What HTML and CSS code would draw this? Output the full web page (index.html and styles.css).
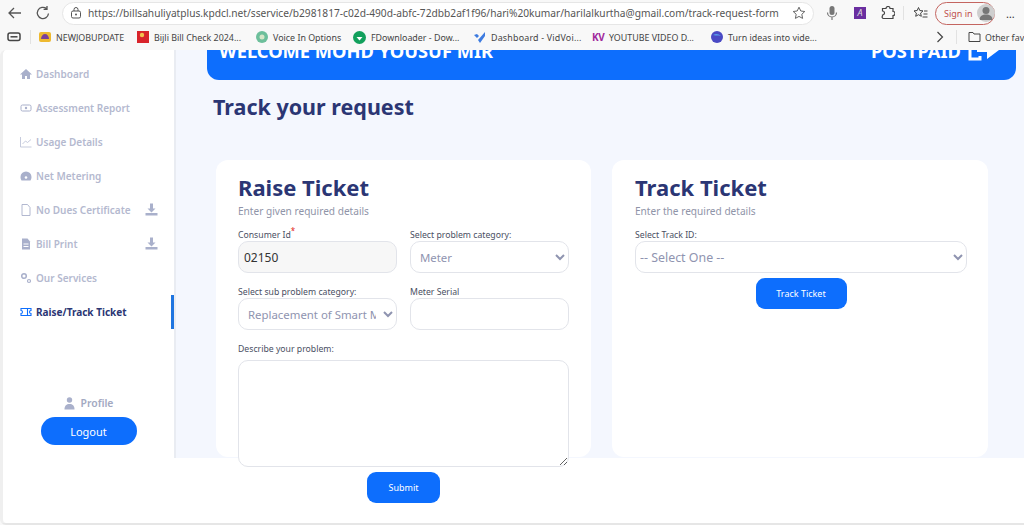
FILE: index.html
```html
<!DOCTYPE html>
<html lang="en">
<head>
    <meta charset="UTF-8">
    <title>Track your request</title>
    <link rel="stylesheet" href="styles.css">
</head>
<body>
    <div class="toolbar">
        <svg class="tool-icon" width="18" height="18" viewBox="0 0 18 18"><path d="M15 9H3M8 4L3 9l5 5" fill="none" stroke="#555" stroke-width="1.3"/></svg>
        <svg class="tool-icon reload" width="16" height="16" viewBox="0 0 16 16"><path d="M13.5 8.500A5.600 5.600 0 1 1 11.500 3.600M12 1v3.400H8.600" fill="none" stroke="#555" stroke-width="1.3"/></svg>
        <div class="address">
            <svg width="12" height="12" viewBox="0 0 12 12"><rect x="1.500" y="4" width="9" height="7" rx="1.500" fill="none" stroke="#555"/><path d="M4 4V2.500a2 2 0 0 1 4 0V4" fill="none" stroke="#555"/><circle cx="6" cy="7.500" r="1" fill="#555"/></svg>
            <span class="url">https://billsahuliyatplus.kpdcl.net/sservice/b2981817-c02d-490d-abfc-72dbb2af1f96/hari%20kumar/harilalkurtha@gmail.com/track-request-form</span>
            <svg class="star" width="14" height="14" viewBox="0 0 14 14"><path d="M7 1.200l1.800 3.800 4 .5-3 2.800.8 4.100L7 10.400l-3.600 2 .8-4.100-3-2.800 4-.5z" fill="none" stroke="#666"/></svg>
        </div>
        <svg class="mic" width="12" height="16" viewBox="0 0 12 16"><rect x="3.500" y="1" width="5" height="9" rx="2.500" fill="#777"/><path d="M1.500 7.500a4.500 4.500 0 0 0 9 0M6 12v3" fill="none" stroke="#777" stroke-width="1.200"/></svg>
        <span class="ext-a">A</span>
        <svg class="puzzle" width="14" height="14" viewBox="0 0 14 14"><path d="M5 2.500a2 2 0 0 1 4 0h3v3a2 2 0 0 1 0 4v3H2.500a1.500 1.500 0 0 1-1-2.500V9a2 2 0 0 0 0-4V2.500z" fill="none" stroke="#444" stroke-width="1.200"/></svg>
        <span class="divider"></span>
        <svg class="favs" width="15" height="14" viewBox="0 0 15 14"><path d="M5.500 1.500l1.300 3 3.200.4-2.400 2.200.7 3.200-2.800-1.600-2.800 1.600.7-3.200L1 4.900l3.200-.4zM11 5h3.500M10.500 8h4M9.500 11h5" fill="none" stroke="#444"/></svg>
        <div class="signin">
            <span>Sign in</span>
            <span class="avatar"><svg width="18" height="18" viewBox="0 0 18 18"><circle cx="9" cy="6.500" r="3.500" fill="#777"/><path d="M2.500 16c0-4 3-5.500 6.500-5.500s6.500 1.500 6.500 5.500z" fill="#777"/></svg></span>
        </div>
        <span class="more">&#8230;</span>
    </div>

    <div class="bookmarks">
        <svg class="bm-tabs" width="14" height="10" viewBox="0 0 14 10"><rect x="1" y="1" width="12" height="7.500" rx="2" fill="none" stroke="#444" stroke-width="1.500"/><path d="M3.500 4.800h7" stroke="#444" stroke-width="1.500"/></svg>
        <span class="bm-sep"></span>
        <div class="bm bm-1"><svg class="bm-svg" width="12" height="12" viewBox="0 0 12 12"><rect y="1" width="12" height="10" rx="2" fill="#eeb92f"/><path d="M2 8c0-3 2-5 4-5s4 2 4 5z" fill="#7a3f9a"/></svg>NEWJOBUPDATE</div>
        <div class="bm bm-2"><svg class="bm-svg" width="12" height="12" viewBox="0 0 12 12"><rect width="12" height="12" fill="#d8232a"/><circle cx="5" cy="4" r="2.200" fill="#f2c14e"/></svg>Bijli Bill Check 2024...</div>
        <div class="bm bm-3"><svg class="bm-svg" width="12" height="12" viewBox="0 0 12 12"><circle cx="6" cy="6" r="6" fill="#6dbf9b"/><circle cx="6" cy="6" r="2.500" fill="#d6e6c8"/></svg>Voice In Options</div>
        <div class="bm bm-4"><svg class="bm-svg" width="13" height="13" viewBox="0 0 13 13"><circle cx="6.500" cy="6.500" r="6.500" fill="#12a05c"/><path d="M3.500 6h6l-3 3.500z" fill="#fff"/></svg>FDownloader - Dow...</div>
        <div class="bm bm-5"><svg class="bm-svg" width="13" height="13" viewBox="0 0 13 13"><path d="M1 4l3 3 2-2-2-2zM12 1L5 9l2 3 5-7z" fill="#3d7be0"/></svg>Dashboard - VidVoi...</div>
        <div class="bm bm-6"><span class="kv">KV</span>YOUTUBE VIDEO D...</div>
        <div class="bm bm-7"><svg class="bm-svg" width="12" height="12" viewBox="0 0 12 12"><circle cx="6" cy="6" r="6" fill="#4a49c4"/><path d="M2 4c3-2 6-1 8 1-3-1-5 0-8-1z" fill="#5aa0e8"/></svg>Turn ideas into vide...</div>
        <svg class="bm-more" width="8" height="12" viewBox="0 0 8 12"><path d="M1.500 1l5 5-5 5" fill="none" stroke="#444" stroke-width="1.200"/></svg>
        <span class="bm-sep right"></span>
        <svg class="bm-svg" width="13" height="12" viewBox="0 0 13 12"><path d="M1 10.500V1.500h4l1 1.500h6v7.500z" fill="none" stroke="#444"/></svg>
        <span class="bm-other">Other favorites</span>
    </div>

    <div class="page">
        <div class="app">
            <div class="sidebar">
                <div class="nav-item">
                    <svg class="nav-icon" viewBox="0 0 12 12"><path d="M6 1L0 6.500h2V11h3V8h2v3h3V6.500h2z" fill="#a9b0cb"/></svg>
                    <span>Dashboard</span>
                </div>
                <div class="nav-item">
                    <svg class="nav-icon" viewBox="0 0 12 12"><rect x="1" y="3" width="10" height="6" rx="1.500" fill="none" stroke="#a9b0cb"/><circle cx="6" cy="6" r="1.200" fill="#a9b0cb"/></svg>
                    <span>Assessment Report</span>
                </div>
                <div class="nav-item">
                    <svg class="nav-icon" viewBox="0 0 12 12"><path d="M.5 1v10h11M2.500 8l3-3 2 1.500L11 3.500" fill="none" stroke="#b8bed4" stroke-width=".8"/></svg>
                    <span>Usage Details</span>
                </div>
                <div class="nav-item">
                    <svg class="nav-icon" viewBox="0 0 12 12"><path d="M6 1.500a5.500 5.500 0 0 0-5.500 5.500c0 1.500.5 2.500 1 3.500h9c.5-1 1-2 1-3.500A5.500 5.500 0 0 0 6 1.500z" fill="#a9b0cb"/><circle cx="6" cy="7.500" r="1.300" fill="#fff"/></svg>
                    <span>Net Metering</span>
                </div>
                <div class="nav-item">
                    <svg class="nav-icon" viewBox="0 0 12 12"><path d="M2 .5h5.500l2.500 3v8H2z" fill="none" stroke="#a9b0cb" stroke-width=".9"/></svg>
                    <span>No Dues Certificate</span>
                    <svg class="nav-download" viewBox="0 0 13 13"><path d="M5 .5h3v5h2.500L6.500 9.500l-4-4H5zM.5 10h12v2.500H.5z" fill="#a9b0cb"/></svg>
                </div>
                <div class="nav-item">
                    <svg class="nav-icon" viewBox="0 0 12 12"><path d="M2 .5h5.500l2.500 3v8H2z" fill="#a9b0cb"/><path d="M3.500 6h5M3.500 8.500h5" stroke="#fff"/></svg>
                    <span>Bill Print</span>
                    <svg class="nav-download" viewBox="0 0 13 13"><path d="M5 .5h3v5h2.500L6.500 9.500l-4-4H5zM.5 10h12v2.500H.5z" fill="#a9b0cb"/></svg>
                </div>
                <div class="nav-item">
                    <svg class="nav-icon" viewBox="0 0 12 12"><circle cx="4" cy="4" r="2.300" fill="none" stroke="#a9b0cb" stroke-width="1.500"/><circle cx="9" cy="9" r="1.500" fill="none" stroke="#a9b0cb" stroke-width="1.200"/></svg>
                    <span>Our Services</span>
                </div>
                <div class="nav-item active">
                    <svg class="nav-icon" viewBox="0 0 12 12"><path d="M1 2.500h10v2a1.500 1.500 0 0 0 0 3v2H1v-2a1.500 1.500 0 0 0 0-3zM7.500 2.500v7" fill="none" stroke="#0d6efd" stroke-width="1.100"/></svg>
                    <span>Raise/Track Ticket</span>
                </div>
                <div class="sidebar-foot">
                    <div class="profile">
                        <svg width="11" height="13" viewBox="0 0 11 13"><circle cx="5.500" cy="3" r="2.700" fill="#a9b0cb"/><path d="M.5 12.500c0-4 2-5.500 5-5.500s5 1.500 5 5.500z" fill="#a9b0cb"/></svg>
                        <span>Profile</span>
                    </div>
                    <button class="logout">Logout</button>
                </div>
            </div>

            <div class="main">
                <div class="banner">
                    <span>WELCOME MOHD YOUSUF MIR</span>
                    <div class="banner-right">
                        <span>POSTPAID</span>
                        <svg width="33" height="30" viewBox="0 0 33 30"><path d="M8 6H3v18h10v-3" fill="none" stroke="#fff" stroke-width="3"/><path d="M10 14h10V6l12 9-12 9v-7H10z" fill="#fff"/></svg>
                    </div>
                </div>
                <h1 class="page-title">Track your request</h1>
                <div class="cards">
                    <div class="card">
                        <h2>Raise Ticket</h2>
                        <p class="sub">Enter given required details</p>
                        <div class="form-grid">
                            <div class="field">
                                <label>Consumer Id<sup>*</sup></label>
                                <input class="control readonly" type="text" value="02150" readonly>
                            </div>
                            <div class="field">
                                <label>Select problem category:</label>
                                <select class="control narrow"><option>Meter</option></select>
                            </div>
                            <div class="field">
                                <label>Select sub problem category:</label>
                                <select class="control narrow"><option>Replacement of Smart Meter</option></select>
                            </div>
                            <div class="field">
                                <label>Meter Serial</label>
                                <input class="control" type="text">
                            </div>
                            <div class="field wide">
                                <label>Describe your problem:</label>
                                <textarea class="control area"></textarea>
                            </div>
                        </div>
                        <button class="submit">Submit</button>
                    </div>
                    <div class="card card-track">
                        <h2>Track Ticket</h2>
                        <p class="sub">Enter the required details</p>
                        <div class="field">
                            <label>Select Track ID:</label>
                            <select class="control track"><option>-- Select One --</option></select>
                        </div>
                        <button class="submit track-btn">Track Ticket</button>
                    </div>
                </div>
            </div>
        </div>
    </div>
</body>
</html>
```
FILE: styles.css
```css
* {
    box-sizing: border-box;
}

html, body {
    height: 100%;
}

body {
    margin: 0;
    overflow: hidden;
    font-family: "Noto Sans", "Open Sans", Arial, sans-serif;
    background-color: #f8f8f8;
}

/* browser chrome */
.toolbar {
    height: 26px;
    display: flex;
    align-items: center;
    padding-left: 6px;
}

.reload {
    margin-left: 11px;
}

.address {
    width: 752px;
    height: 23px;
    margin-left: 11px;
    padding: 0 7px 0 7px;
    display: flex;
    align-items: center;
    background-color: #fff;
    border: 1px solid #e6e6e6;
    border-radius: 12px;
}

.url {
    margin-left: 6px;
    flex: 1;
    font-size: 10.2px;
    color: #555;
    white-space: nowrap;
    overflow: hidden;
}

.mic {
    margin-left: 12px;
}

.ext-a {
    width: 12px;
    height: 12px;
    margin-left: 16px;
    background-color: #6a2ea0;
    color: #ddd;
    font-size: 9px;
    font-style: italic;
    line-height: 12px;
    text-align: center;
}

.puzzle {
    margin-left: 15px;
}

.divider {
    width: 1px;
    height: 14px;
    margin-left: 8px;
    background-color: #e2e2e2;
}

.favs {
    margin-left: 9px;
}

.signin {
    width: 60px;
    height: 23px;
    margin-left: 7px;
    padding-left: 8px;
    display: flex;
    align-items: center;
    gap: 4px;
    font-size: 9px;
    color: #c0504d;
    white-space: nowrap;
    border: 1px solid #c46560;
    border-radius: 12px;
}

.avatar {
    width: 18px;
    height: 18px;
    flex-shrink: 0;
    border-radius: 50%;
    background-color: #cfcfcf;
    overflow: hidden;
}

.avatar svg {
    display: block;
}

.more {
    margin-left: 11px;
    font-size: 11px;
    color: #333;
}

.bookmarks {
    height: 24px;
    padding-bottom: 2px;
    display: flex;
    align-items: center;
    padding-left: 7px;
    font-size: 8.9px;
    color: #444;
    white-space: nowrap;
    overflow: hidden;
}

.bookmarks > * {
    flex-shrink: 0;
}

.bm-sep {
    width: 1px;
    height: 14px;
    margin: 0 8px 0 9px;
    background-color: #e2e2e2;
}

.bm {
    display: flex;
    align-items: center;
    gap: 5px;
}

.bm-1 { width: 98px; }
.bm-2 { width: 119px; }
.bm-3 { width: 97px; }
.bm-4 { width: 120px; }
.bm-5 { width: 119px; }
.bm-6 { width: 119px; }
.bm-7 { width: 225px; }

.bm-5 {
    letter-spacing: 0.2px;
}

.bm-svg {
    flex-shrink: 0;
}

.kv {
    width: 12px;
    color: #a0289c;
    font-size: 10px;
    font-weight: 700;
    letter-spacing: -0.5px;
}

.bm-sep.right {
    margin: 0 11px 0 12px;
}

.bm-other {
    margin-left: 4px;
}

/* page */
.page {
    height: 475px;
    border-left: 3px solid #efefef;
    border-bottom: 2px solid #e6e6e6;
    border-radius: 6px 0 0 6px;
    background-color: #fff;
    overflow: hidden;
}

.app {
    height: 408px;
    display: flex;
}

.sidebar {
    width: 173px;
    flex-shrink: 0;
    display: flex;
    flex-direction: column;
    padding-top: 7px;
    background-color: #fff;
    border-right: 2px solid #e9ecf2;
}

.nav-item {
    height: 34px;
    padding-left: 17px;
    padding-bottom: 1px;
    display: flex;
    align-items: center;
    gap: 4px;
    font-size: 10px;
    font-weight: 600;
    color: #b4b9cf;
}

.nav-icon {
    width: 12px;
    height: 12px;
    flex-shrink: 0;
}

.nav-download {
    width: 13px;
    height: 13px;
    margin-left: auto;
    margin-right: 16px;
}

.nav-item.active {
    color: #2b3674;
    font-weight: 700;
    box-shadow: inset -3px 0 0 #1f75e0;
}

.sidebar-foot {
    margin-top: auto;
    padding-bottom: 13px;
    display: flex;
    flex-direction: column;
    align-items: center;
    gap: 7px;
}

.profile {
    display: flex;
    align-items: center;
    gap: 6px;
    font-size: 10.4px;
    font-weight: 600;
    color: #a3a9c2;
}

.logout {
    width: 96px;
    height: 28px;
    border: none;
    border-radius: 14px;
    background-color: #0d6efd;
    color: #fff;
    font-family: inherit;
    font-size: 11px;
}

.main {
    flex: 1;
    padding: 0 8px 0 31px;
    background-color: #f4f7fe;
}

.banner {
    width: 809px;
    height: 60px;
    margin-top: -30px;
    padding: 0 16px 0 12px;
    display: flex;
    justify-content: space-between;
    align-items: center;
    background-color: #0d6efd;
    border-radius: 0 0 12px 12px;
    color: #fff;
    font-size: 18.3px;
    font-weight: 700;
}

.banner-right {
    display: flex;
    align-items: center;
    gap: 6px;
}

.page-title {
    margin: 11px 0 37px 6px;
    font-size: 21.5px;
    line-height: 32px;
    font-weight: 700;
    color: #2b3674;
}

.cards {
    display: flex;
    gap: 21px;
    margin-left: 9px;
}

.card {
    width: 375px;
    height: 297px;
    padding: 12px 22px 0;
    background-color: #fff;
    border-radius: 12px;
}

.card-track {
    width: 376px;
    padding: 12px 21px 0 23px;
}

.card h2 {
    margin: 0;
    font-size: 22px;
    line-height: 30px;
    font-weight: 700;
    color: #2b3674;
}

.sub {
    margin: 1px 0 9px;
    font-size: 10.1px;
    line-height: 16px;
    color: #8f94a8;
}

.form-grid {
    display: grid;
    grid-template-columns: 159px 159px;
    column-gap: 13px;
    row-gap: 12px;
}

.field label {
    display: block;
    height: 13px;
    font-size: 8.7px;
    line-height: 14px;
    color: #4a4f63;
}

.field sup {
    color: #e31a1a;
    font-size: 8px;
    line-height: 0;
}

.wide {
    grid-column: 1 / 3;
}

.wide label {
    margin-bottom: 5px;
}

.control {
    display: block;
    width: 100%;
    height: 32px;
    padding: 0 4px;
    background-color: #fff;
    border: 1px solid #e2e4ea;
    border-radius: 10px;
    font-family: inherit;
    font-size: 12.4px;
    color: #8f94b0;
    outline: none;
}

.narrow {
    padding-left: 5px;
    font-size: 11.4px;
}

.readonly {
    padding-left: 5px;
    background-color: #f7f7f7;
    color: #333;
    font-size: 12px;
}

.area {
    height: 107px;
}

.submit {
    display: block;
    width: 73px;
    height: 31px;
    margin: 5px auto 0;
    border: none;
    border-radius: 9px;
    background-color: #0d6efd;
    color: #fff;
    font-family: inherit;
    font-size: 9px;
}

.track {
    padding-left: 0;
}

.track-btn {
    width: 91px;
    margin-top: 5px;
}
```
